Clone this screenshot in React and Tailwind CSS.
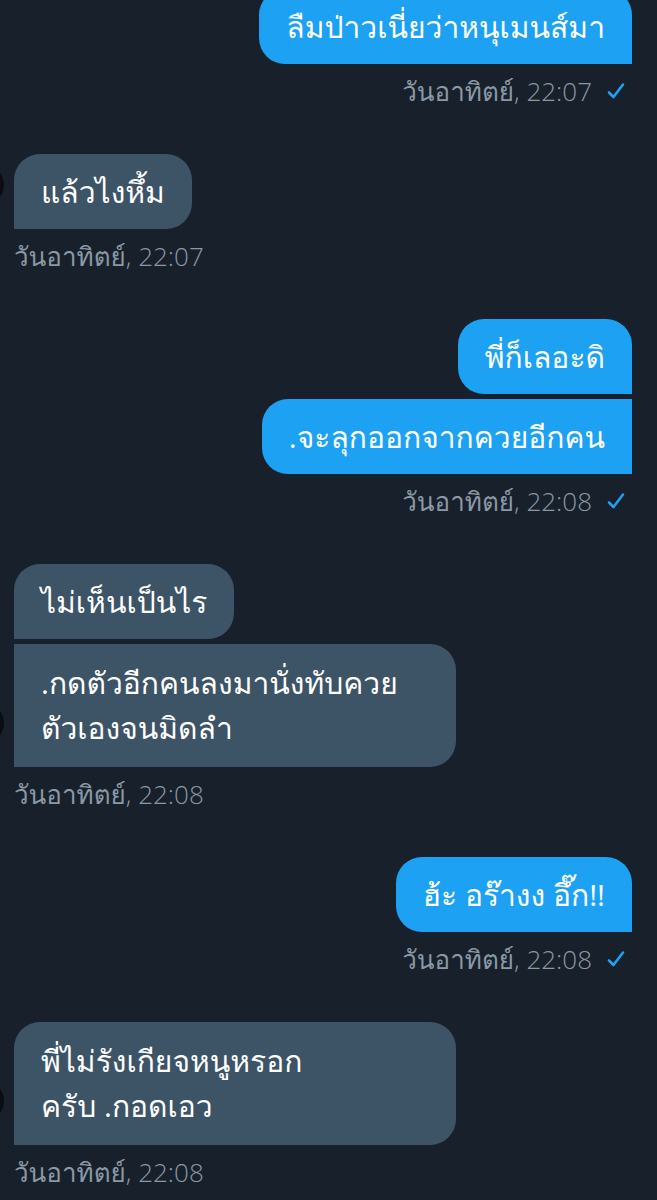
import React from 'react';

const blue = 'bg-[#1da1f2] px-[27px] pt-[15px] pb-[15px] text-[30px] leading-[45px] whitespace-nowrap';
const grey = 'bg-[#3d5466] px-[27px] pt-[15px] pb-[15px] text-[30px] leading-[45px] whitespace-nowrap';

function Check() {
  return (
    <svg width="20" height="20" viewBox="0 0 20 20" className="ml-[14px]">
      <path d="M3 11.5 L7.5 16 L17 3.5" fill="none" stroke="#1da1f2" strokeWidth="2.6" strokeLinecap="round" strokeLinejoin="round" />
    </svg>
  );
}

function Stamp({ time, mine }) {
  return (
    <div className={`flex items-center mt-[13px] text-[26px] leading-[28px] font-light text-[#8b98a5] ${mine ? 'justify-end pr-[6px]' : 'justify-start'}`}>
      <span>วันอาทิตย์, {time}</span>
      {mine && <Check />}
    </div>
  );
}

// cut-off avatar peeking in from the left edge
function Avatar() {
  return <div className="w-[40px] h-[40px] rounded-full bg-[#0a0d11] ml-[-36px] mr-[10px] shrink-0 self-end mb-[24px]" />;
}

export default function App() {
  return (
    <div className="min-h-screen bg-[#17202b] overflow-hidden text-white font-['Open_Sans','Loma',sans-serif]">
      <div className="flex flex-col pr-[25px]">
        {/* sent */}
        <div className="flex justify-end mt-[-11px]">
          <div className={`${blue} rounded-t-[26px] rounded-bl-[26px]`}>ลืมป่าวเนี่ยว่าหนุเมนส์มา</div>
        </div>
        <Stamp time="22:07" mine />

        {/* received */}
        <div className="flex mt-[49px]">
          <Avatar />
          <div className="flex flex-col items-start">
            <div className={`${grey} rounded-t-[26px] rounded-br-[26px]`}>แล้วไงหึ้ม</div>
          </div>
        </div>
        <div className="pl-[14px]"><Stamp time="22:07" /></div>

        {/* sent */}
        <div className="flex flex-col items-end mt-[49px] gap-[5px]">
          <div className={`${blue} rounded-t-[26px] rounded-bl-[26px]`}>พี่ก็เลอะดิ</div>
          <div className={`${blue} rounded-l-[26px]`}>.จะลุกออกจากควยอีกคน</div>
        </div>
        <Stamp time="22:08" mine />

        {/* received */}
        <div className="flex mt-[49px]">
          <Avatar />
          <div className="flex flex-col items-start gap-[5px]">
            <div className={`${grey} rounded-t-[26px] rounded-br-[26px]`}>ไม่เห็นเป็นไร</div>
            <div className={`${grey} rounded-r-[26px] w-[442px] pt-[16px] pb-[17px]`}>
              .กดตัวอีกคนลงมานั่งทับควย<br />ตัวเองจนมิดลำ
            </div>
          </div>
        </div>
        <div className="pl-[14px]"><Stamp time="22:08" /></div>

        {/* sent */}
        <div className="flex justify-end mt-[49px]">
          <div className={`${blue} rounded-t-[26px] rounded-bl-[26px]`}>ฮ้ะ อร๊างง อึ๊ก!!</div>
        </div>
        <Stamp time="22:08" mine />

        {/* received */}
        <div className="flex mt-[49px]">
          <Avatar />
          <div className="flex flex-col items-start">
            <div className={`${grey} rounded-t-[26px] rounded-br-[26px] w-[442px] pt-[16px] pb-[17px]`}>
              พี่ไม่รังเกียจหนูหรอก<br />ครับ .กอดเอว
            </div>
          </div>
        </div>
        <div className="pl-[14px]"><Stamp time="22:08" /></div>
      </div>
    </div>
  );
}
